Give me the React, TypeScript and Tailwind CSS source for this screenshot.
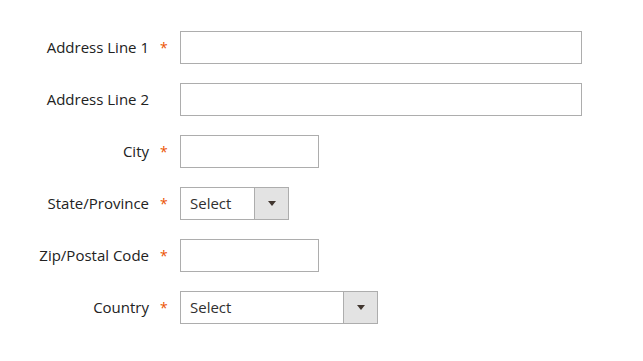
const fields: { label: string; required: boolean; kind: "input" | "select"; width: string }[] = [
  { label: "Address Line 1", required: true, kind: "input", width: "w-[402px]" },
  { label: "Address Line 2", required: false, kind: "input", width: "w-[402px]" },
  { label: "City", required: true, kind: "input", width: "w-[139px]" },
  { label: "State/Province", required: true, kind: "select", width: "w-[109px]" },
  { label: "Zip/Postal Code", required: true, kind: "input", width: "w-[139px]" },
  { label: "Country", required: true, kind: "select", width: "w-[198px]" },
];

function SelectBox({ width }: { width: string }) {
  return (
    <div className={`${width} h-[33px] flex border border-[#adadad] bg-white`}>
      <span className="flex-1 pl-[9px] leading-[31px] text-[15px] text-[#303030]">Select</span>
      <span className="w-[34px] flex items-center justify-center border-l border-[#adadad] bg-[#e3e3e3]">
        <svg width="8" height="5" viewBox="0 0 8 5">
          <path d="M0 0h8L4 5z" fill="#41362f" />
        </svg>
      </span>
    </div>
  );
}

export default function App() {
  return (
    <div className="w-[643px] h-[361px] bg-white pt-[31px] font-['Open_Sans',sans-serif]">
      <div className="flex flex-col gap-[19px]">
        {fields.map((f) => (
          <div key={f.label} className="flex items-center h-[33px]">
            <label className="w-[149px] text-right text-[15px] font-medium text-[#222222]">{f.label}</label>
            <span className="w-[31px] pl-[11px] text-[14px] text-[#eb5202]">{f.required ? "*" : ""}</span>
            {f.kind === "input" ? (
              <div className={`${f.width} h-[33px] border border-[#adadad] bg-white`} />
            ) : (
              <SelectBox width={f.width} />
            )}
          </div>
        ))}
      </div>
    </div>
  );
}
